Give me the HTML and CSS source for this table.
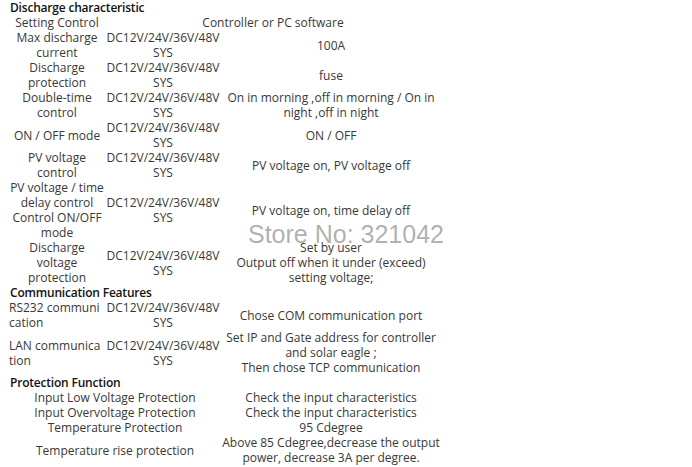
FILE: index.html
```html
<!DOCTYPE html>
<html>
<head>
    <title>Discharge characteristic</title>
    <link rel="stylesheet" href="styles.css">
</head>
<body>

    <div class="wrap">
        <table class="spec">
            <colgroup>
                <col class="c1">
                <col class="c2">
                <col class="c3">
            </colgroup>
            <tr class="head"><td colspan="3">Discharge characteristic</td></tr>
            <tr>
                <td>Setting Control</td>
                <td colspan="2">Controller or PC software</td>
            </tr>
            <tr>
                <td>Max discharge<br>current</td>
                <td>DC12V/24V/36V/48V<br>SYS</td>
                <td>100A</td>
            </tr>
            <tr>
                <td>Discharge<br>protection</td>
                <td>DC12V/24V/36V/48V<br>SYS</td>
                <td>fuse</td>
            </tr>
            <tr>
                <td>Double-time<br>control</td>
                <td>DC12V/24V/36V/48V<br>SYS</td>
                <td>On in morning ,off in morning / On in<br>night ,off in night</td>
            </tr>
            <tr>
                <td>ON / OFF mode</td>
                <td>DC12V/24V/36V/48V<br>SYS</td>
                <td>ON / OFF</td>
            </tr>
            <tr>
                <td>PV voltage<br>control</td>
                <td>DC12V/24V/36V/48V<br>SYS</td>
                <td>PV voltage on, PV voltage off</td>
            </tr>
            <tr>
                <td>PV voltage / time<br>delay control<br>Control ON/OFF<br>mode</td>
                <td>DC12V/24V/36V/48V<br>SYS</td>
                <td>PV voltage on, time delay off</td>
            </tr>
            <tr>
                <td>Discharge<br>voltage<br>protection</td>
                <td>DC12V/24V/36V/48V<br>SYS</td>
                <td>Set by user<br>Output off when it under (exceed)<br>setting voltage;</td>
            </tr>
            <tr class="head"><td colspan="3">Communication Features</td></tr>
            <tr>
                <td class="left">RS232 communi<br>cation</td>
                <td>DC12V/24V/36V/48V<br>SYS</td>
                <td>Chose COM communication port</td>
            </tr>
            <tr>
                <td class="left">LAN communica<br>tion</td>
                <td>DC12V/24V/36V/48V<br>SYS</td>
                <td>Set IP and Gate address for controller<br>and solar eagle ;<br>Then chose TCP communication</td>
            </tr>
            <tr class="head"><td colspan="3">Protection Function</td></tr>
            <tr>
                <td colspan="2">Input Low Voltage Protection</td>
                <td>Check the input characteristics</td>
            </tr>
            <tr>
                <td colspan="2">Input Overvoltage Protection</td>
                <td>Check the input characteristics</td>
            </tr>
            <tr>
                <td colspan="2">Temperature Protection</td>
                <td>95 Cdegree</td>
            </tr>
            <tr>
                <td colspan="2">Temperature rise protection</td>
                <td>Above 85 Cdegree,decrease the output<br>power, decrease 3A per degree.</td>
            </tr>
        </table>

        <div class="mark">Store No: 321042</div>
    </div>

</body>
</html>
```

FILE: styles.css
```css
html, body {
    height: 100%; width: 100%;
}
body {
    margin: 0;
    background: #FFF;
    font-family: "Open Sans", "Liberation Sans", sans-serif;
    font-size: 12px;
    line-height: 15px;
    color: #383838;
}
.wrap {
    position: relative;
    padding: 0 0 0 9px;
}
.spec {
    border-collapse: collapse;
    table-layout: fixed;
    width: 432px;
}
.spec col.c1 {width: 96px;}
.spec col.c2 {width: 116px;}
.spec col.c3 {width: 220px;}
.spec td {
    padding: 0;
    text-align: center;
    vertical-align: middle;
    white-space: nowrap;
}
.spec td.left {
    text-align: left;
}
.spec tr.head td {
    padding-left: 1px;
    text-align: left;
    font-weight: 600;
    letter-spacing: -0.2px;
    color: #111;
}
.mark {
    position: absolute;
    top: 221px; left: 248px;
    font-family: "Liberation Sans", Arial, sans-serif;
    font-size: 25px;
    line-height: 26px;
    color: rgba(110, 110, 110, .55);
    text-shadow: 0 0 1px #FFF;
}
```
